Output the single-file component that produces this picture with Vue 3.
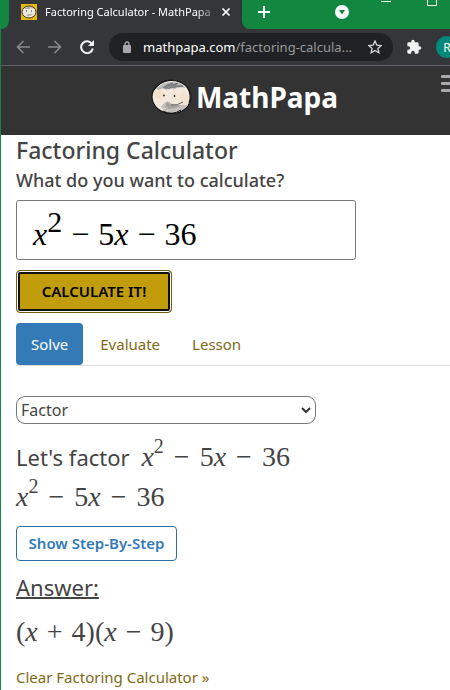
<template>
  <div class="window">
    <div class="tab-strip">
      <div class="tab-edge"></div>
      <div class="browser-tab">
        <svg class="favicon" viewBox="0 0 16 16">
          <rect width="16" height="16" fill="#e9b80c" />
          <ellipse cx="8" cy="8" rx="7" ry="6" fill="#eee8de" stroke="#3b3528" />
          <path d="M3 5 Q8 1 13 5 L10 4 8 5Z" fill="#aaa" />
          <path d="M5 7h1M10 7h1" stroke="#222" />
          <path d="M5 11 Q8 9 12 10 Q8 14 5 11" fill="#bbb7b0" />
        </svg>
        <span class="tab-title">Factoring Calculator - MathPapa</span>
        <button class="icon-button" aria-label="Close tab">
          <svg width="10" height="10" viewBox="0 0 10 10"><path d="M1.500 1.500l7 7M8.500 1.500l-7 7" stroke="#fff" stroke-width="1.700" /></svg>
        </button>
      </div>
      <div class="strip-rest">
        <button class="icon-button" aria-label="New tab">
          <svg width="12" height="12" viewBox="0 0 12 12"><path d="M6 0v12M0 6h12" stroke="#fff" stroke-width="2" /></svg>
        </button>
        <button class="icon-button tab-search" aria-label="Search tabs">
          <svg width="14" height="14" viewBox="0 0 14 14"><circle cx="7" cy="7" r="7" fill="#fff" /><path d="M4 5h6L7 9.500z" fill="#12873f" /></svg>
        </button>
        <button class="icon-button minimize" aria-label="Minimize">
          <svg width="10" height="6" viewBox="0 0 10 6"><path d="M0 1.500h10" stroke="#fff" /></svg>
        </button>
        <button class="icon-button maximize" aria-label="Maximize">
          <svg width="10" height="6" viewBox="0 0 10 6"><path d="M.5 0v5.500h9V0" stroke="#fff" fill="none" /></svg>
        </button>
      </div>
    </div>

    <div class="toolbar">
      <button class="icon-button" aria-label="Back">
        <svg width="14" height="14" viewBox="0 0 14 14"><path d="M14 7H1.500M7.500 1L1.500 7l6 6" stroke="#87898c" stroke-width="1.600" fill="none" /></svg>
      </button>
      <button class="icon-button" aria-label="Forward">
        <svg width="14" height="14" viewBox="0 0 14 14"><path d="M0 7h12.500M6.500 1l6 6-6 6" stroke="#87898c" stroke-width="1.600" fill="none" /></svg>
      </button>
      <button class="icon-button" aria-label="Reload">
        <svg width="14" height="14" viewBox="0 0 14 14"><path d="M12 4A5.900 5.900 0 1 0 12.800 8.500" stroke="#f1f1f1" stroke-width="2" fill="none" /><path d="M14 0v6H8z" fill="#f1f1f1" /></svg>
      </button>
      <div class="address">
        <svg class="lock" width="8" height="12" viewBox="0 0 8 12"><rect y="4" width="8" height="8" rx="1" fill="#a9a7ab" /><path d="M2 5V3a2 2 0 0 1 4 0v2" stroke="#a9a7ab" stroke-width="1.300" fill="none" /></svg>
        <span class="url">mathpapa.com<span class="url-path">/factoring-calcula...</span></span>
        <button class="icon-button" aria-label="Bookmark this page">
          <svg width="14" height="14" viewBox="0 0 14 14"><path d="M7 1l1.800 4.100 4.400.4-3.300 2.900 1 4.400L7 10.500l-3.900 2.300 1-4.400L.8 5.500l4.400-.4z" stroke="#d5d5d7" stroke-width="1.300" fill="none" /></svg>
        </button>
      </div>
      <button class="icon-button" aria-label="Extensions">
        <svg width="16" height="16" viewBox="0 0 24 24"><path d="M20.500 11H19V7a2 2 0 0 0-2-2h-4V3.500a2.500 2.500 0 0 0-5 0V5H4a2 2 0 0 0-2 2v3.800h1.500a2.700 2.700 0 0 1 0 5.400H2V20a2 2 0 0 0 2 2h3.800v-1.500a2.700 2.700 0 0 1 5.400 0V22H17a2 2 0 0 0 2-2v-4h1.500a2.500 2.500 0 0 0 0-5z" fill="#f1f1f1" /></svg>
      </button>
      <button class="avatar" aria-label="Profile">R</button>
    </div>

    <header class="site-header">
      <a href="#" class="brand">
        <svg width="42" height="36" viewBox="0 0 42 36">
          <ellipse cx="20.500" cy="18" rx="19.500" ry="16.500" fill="#f2e9dc" stroke="#171717" stroke-width="1.200" />
          <ellipse cx="8" cy="15" rx="5" ry="5" fill="#f9dcc3" opacity=".7" />
          <ellipse cx="33" cy="20" rx="5" ry="6" fill="#f7dfca" opacity=".6" />
          <path d="M5 10Q12 3 20 3q9-1 15 6l-7-1-6 3 1-4-8 4-2-2-5 2z" fill="#b9b9b9" />
          <path d="M12 9Q16 5 22 4L15 10M17 10q4-5 10-6l-4 5M24 8q3-2 8-1l-5 1" fill="#85878a" stroke="#686b6f" stroke-width=".8" />
          <path d="M10 28q3-5 7-6 3 3 9 4h11q-4 5-10 7-10 2-14-2z" fill="#c4c1bd" />
          <path d="M16 23q-4 5 2 7 8-1 13-4-9 2-15-3z" fill="#a5a29e" />
          <path d="M20 26q6 1 12-3" fill="none" stroke="#65635f" />
          <circle cx="13" cy="16.500" r=".9" fill="#222" />
          <circle cx="23.500" cy="17" r=".9" fill="#222" />
          <path d="M3 11Q11 0 22 1M36 8q5 8 2 16M12 32q9 5 18-1" stroke="#111" fill="none" />
        </svg>
        <span>MathPapa</span>
      </a>
      <button class="menu-button" aria-label="Menu">
        <span></span>
        <span></span>
        <span></span>
      </button>
    </header>

    <main class="content">
      <h1>Factoring Calculator</h1>
      <label class="question" for="expression">What do you want to calculate?</label>
      <div class="math-field">
        <span class="math math-large" aria-hidden="true"><span v-for="(token, i) in tokens" :key="i" :class="token.type">{{ token.text }}</span></span>
        <input id="expression" v-model="expression" type="text" autocomplete="off" />
      </div>
      <button class="calculate">CALCULATE IT!</button>

      <nav class="tabs">
        <a v-for="tab in tabs" :key="tab" href="#" :class="{ active: tab === activeTab }" @click.prevent="activeTab = tab">{{ tab }}</a>
      </nav>

      <div class="select-wrap">
        <select v-model="operation" aria-label="Operation">
          <option>Factor</option>
          <option>Simplify</option>
        </select>
        <svg class="chevron" width="10" height="7" viewBox="0 0 10 7"><path d="M1 1l4 4 4-4" stroke="#333" stroke-width="2" fill="none" /></svg>
      </div>

      <p class="line problem">Let's factor <span class="math"><span v-for="(token, i) in tokens" :key="i" :class="token.type">{{ token.text }}</span></span></p>
      <p class="line"><span class="math"><span v-for="(token, i) in tokens" :key="i" :class="token.type">{{ token.text }}</span></span></p>
      <button class="steps">Show Step-By-Step</button>
      <p class="line answer-label"><u>Answer:</u></p>
      <p class="line answer"><span class="math"><span v-for="(token, i) in answer" :key="i" :class="token.type">{{ token.text }}</span></span></p>
      <a href="#" class="clear">Clear Factoring Calculator »</a>
    </main>
  </div>
</template>

<script setup>
import { ref, computed } from 'vue';

const expression = ref('x^2-5x-36');
const operation = ref('Factor');
const tabs = ['Solve', 'Evaluate', 'Lesson'];
const activeTab = ref('Solve');

const tokens = computed(() => tokenize(expression.value));
const answer = tokenize('(x+4)(x-9)');

// split an expression into pieces that are styled separately
function tokenize(source) {
  const parts = source.match(/\^\d+|\d+|[a-z]|[-+]|[()]/g) || [];
  return parts.map((part) => {
    if (part[0] === '^') return { type: 'power', text: part.slice(1) };
    if (/[a-z]/.test(part)) return { type: 'variable', text: part };
    if (part === '-') return { type: 'operator', text: '−' };
    if (part === '+') return { type: 'operator', text: '+' };
    return { type: 'plain', text: part };
  });
}
</script>

<style>
body {
  background: #fff;
}
</style>

<style scoped>
.window {
  box-sizing: border-box;
  min-height: 100vh;
  border-left: 1px solid #12873f;
  overflow: hidden;
  color: #444;
  font-family: "Noto Sans", sans-serif;
}

button {
  font-family: inherit;
  cursor: pointer;
}

.icon-button {
  display: flex;
  flex: none;
  padding: 0;
  border: 0;
  background: none;
}

.tab-strip {
  display: flex;
  height: 29px;
  background: #35363a;
}

.tab-edge {
  width: 8px;
  background: #12873f;
  border-bottom-right-radius: 8px;
}

.browser-tab {
  display: flex;
  align-items: center;
  box-sizing: border-box;
  width: 233px;
  padding: 0 11px 5px 12px;
}

.favicon {
  flex: none;
  width: 16px;
  height: 16px;
}

.tab-title {
  flex: 1;
  margin-left: 8px;
  color: #fff;
  font-size: 11px;
  line-height: 18px;
  white-space: nowrap;
  mask-image: linear-gradient(to right, #000 86%, transparent 99%);
}

.strip-rest {
  display: flex;
  flex: 1;
  align-items: center;
  padding: 0 13px 5px 16px;
  background: #12873f;
  border-bottom-left-radius: 8px;
}

.tab-search {
  margin-left: 65px;
}

.minimize {
  align-self: flex-start;
  margin-left: auto;
}

.maximize {
  align-self: flex-start;
  margin-left: 36px;
}

.toolbar {
  display: flex;
  align-items: center;
  gap: 18px;
  height: 36px;
  padding-left: 15px;
  background: #35363a;
  border-bottom: 1px solid #626266;
}

.address {
  display: flex;
  flex: 1;
  align-items: center;
  min-width: 0;
  height: 28px;
  margin-left: -3px;
  margin-right: -5px;
  padding: 0 11px 0 14px;
  border-radius: 14px;
  background: #202124;
}

.lock {
  flex: none;
}

.url {
  flex: 1;
  margin-left: 12px;
  overflow: hidden;
  color: #fff;
  font-size: 13px;
  line-height: 20px;
  white-space: nowrap;
}

.url-path {
  color: #98999d;
}

.avatar {
  flex: none;
  width: 22px;
  height: 22px;
  margin: 0 -8px 0 -4px;
  padding: 0;
  border: 0;
  border-radius: 11px;
  background: #00897b;
  color: #fff;
  font-size: 12px;
}

.site-header {
  display: flex;
  align-items: center;
  justify-content: center;
  position: relative;
  height: 69px;
  background: #333;
}

.brand {
  display: flex;
  align-items: center;
  gap: 3px;
  margin-left: 38px;
  padding-bottom: 8px;
  color: #fff;
  font-size: 28px;
  font-weight: 700;
  line-height: 40px;
  text-decoration: none;
}

.menu-button {
  position: absolute;
  top: 9px;
  right: -13px;
  display: grid;
  gap: 4px;
  padding: 0;
  border: 0;
  background: none;
}

.menu-button span {
  width: 22px;
  height: 3px;
  border-radius: 1px;
  background: #aaa8ad;
}

.content {
  display: flex;
  flex-direction: column;
  align-items: flex-start;
  padding-left: 15px;
}

h1 {
  margin: 0;
  font-size: 23px;
  font-weight: 500;
  line-height: 31px;
}

.question {
  margin-bottom: 6px;
  font-size: 18px;
  font-weight: 500;
  line-height: 28px;
}

.math-field {
  position: relative;
  box-sizing: border-box;
  width: 100%;
  max-width: 340px;
  height: 60px;
  padding: 15px 16px;
  border: 1px solid #777;
  border-radius: 3px;
  line-height: 36px;
}

.math-field input {
  position: absolute;
  inset: 0;
  width: 100%;
  opacity: 0;
}

.math {
  font-family: "Liberation Serif", serif;
  font-size: 28px;
  white-space: nowrap;
}

.variable {
  font-style: italic;
}

.operator {
  margin: 0 10px;
}

.power {
  font-size: 20px;
  line-height: 0;
  vertical-align: 13px;
}

.math-large {
  color: #000;
  font-size: 32px;
}

.math-large .operator {
  margin: 0 9px;
}

.math-large .power {
  font-size: 30px;
}

.calculate {
  width: 156px;
  height: 43px;
  margin-top: 10px;
  padding: 0 0 2px;
  border: 1px solid #735c0b;
  border-radius: 4px;
  background: #c29d0b;
  box-shadow: inset 0 0 0 1px #fff, inset 0 0 0 3px #101010;
  color: #000;
  font-size: 15px;
  font-weight: 600;
}

.tabs {
  display: flex;
  align-self: stretch;
  gap: 2px;
  margin-top: 10px;
  border-bottom: 1px solid #ddd;
}

.tabs a {
  padding: 10px 15px;
  border-radius: 4px;
  color: #806914;
  font-size: 15px;
  line-height: 22px;
  text-decoration: none;
}

.tabs a.active {
  background: #337ab7;
  color: #fff;
}

.select-wrap {
  position: relative;
  width: 100%;
  max-width: 300px;
  height: 28px;
  margin: 30px 0 13px;
}

select {
  width: 100%;
  height: 28px;
  padding: 0 4px;
  border: 1px solid #777;
  border-radius: 9px;
  background: #fff;
  color: #444;
  font-family: inherit;
  font-size: 16px;
  appearance: none;
}

.chevron {
  position: absolute;
  top: 11px;
  right: 5px;
  pointer-events: none;
}

.line {
  margin: 0;
  font-size: 22px;
  line-height: 40px;
}

.line .math {
  line-height: 32px;
}

.problem .math {
  margin-left: 6px;
}

.steps {
  width: 161px;
  height: 35px;
  margin: 9px 0 6px;
  padding: 0 0 2px;
  border: 1px solid #2f6ea5;
  border-radius: 4px;
  background: #fff;
  color: #337ab7;
  font-size: 15px;
  font-weight: 600;
}

.answer-label u {
  text-decoration-thickness: 2px;
}

.answer {
  margin: 5px 0 13px;
}

.answer .operator {
  margin: 0 9px;
}

.clear {
  color: #806914;
  font-size: 15px;
  line-height: 24px;
  text-decoration: none;
}
</style>
